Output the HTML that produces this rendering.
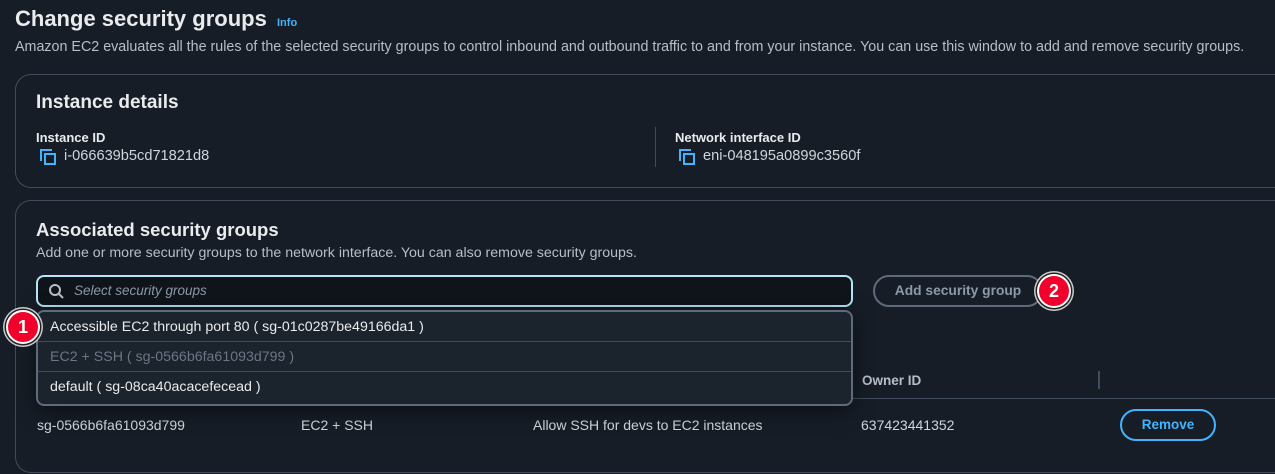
<!DOCTYPE html>
<html><head><meta charset="utf-8"><style>
*{box-sizing:border-box;margin:0;padding:0}
body{width:1275px;height:474px;background:#161d26;font-family:"Liberation Sans",sans-serif;color:#d1d5db;position:relative;overflow:hidden}
.a{position:absolute;white-space:nowrap}
.card{position:absolute;border:1px solid #414d5c;border-radius:16px;border-right:none;border-top-right-radius:0;border-bottom-right-radius:0}
.h{font-weight:bold;color:#e9ebed}
.lbl{font-size:13px;font-weight:bold;color:#e9ebed}
.val{font-size:14.6px;color:#d1d5db}
.badge{position:absolute;width:34px;height:34px;border-radius:50%;background:#f0002a;border:2px solid #fff;box-shadow:0 0 0 1.5px #222,0 0 0 3px #ccc;color:#fff;font-weight:bold;font-size:18px;text-align:center;line-height:30px}
</style></head><body>
<div class="a h" style="left:15px;top:6px;font-size:22px">Change security groups</div>
<div class="a" style="left:277px;top:17px;font-size:11px;font-weight:bold;color:#42b4ff">Info</div>
<div class="a" style="left:15px;top:39px;font-size:14.3px;color:#b6bec9">Amazon EC2 evaluates all the rules of the selected security groups to control inbound and outbound traffic to and from your instance. You can use this window to add and remove security groups.</div>

<div class="card" style="left:15px;top:74px;width:1270px;height:114px"></div>
<div class="a h" style="left:36px;top:92px;font-size:19px">Instance details</div>
<div class="a lbl" style="left:36px;top:130px">Instance ID</div>
<svg class="a" style="left:40px;top:149px" width="16" height="16" viewBox="0 0 16 16" fill="none" stroke="#42b4ff" stroke-width="2"><path d="M1 12V1h11"/><rect x="5" y="5" width="10" height="10"/></svg>
<div class="a val" style="left:64px;top:148px">i-066639b5cd71821d8</div>
<div class="a" style="left:655px;top:127px;width:1px;height:40px;background:#414d5c"></div>
<div class="a lbl" style="left:675px;top:130px">Network interface ID</div>
<svg class="a" style="left:679px;top:149px" width="16" height="16" viewBox="0 0 16 16" fill="none" stroke="#42b4ff" stroke-width="2"><path d="M1 12V1h11"/><rect x="5" y="5" width="10" height="10"/></svg>
<div class="a val" style="left:703px;top:148px">eni-048195a0899c3560f</div>

<div class="card" style="left:15px;top:200px;width:1270px;height:273px"></div>
<div class="a h" style="left:36px;top:219px;font-size:18.5px">Associated security groups</div>
<div class="a" style="left:36px;top:245px;font-size:14.2px;color:#b6bec9">Add one or more security groups to the network interface. You can also remove security groups.</div>
<div class="a" style="left:36px;top:275px;width:817px;height:32px;border:2px solid #b4e5fb;border-radius:8px;background:#0f141a"></div>
<svg class="a" style="left:48px;top:283px" width="16" height="16" viewBox="0 0 16 16" fill="none" stroke="#b6bec9" stroke-width="2"><circle cx="7" cy="7" r="5"/><path d="M11 11l4 4"/></svg>
<div class="a" style="left:74px;top:283px;font-size:13.5px;font-style:italic;color:#8d99a8">Select security groups</div>
<div class="a" style="left:873px;top:275px;width:170px;height:32px;border:2px solid #5f6b7a;border-radius:16px;text-align:center;line-height:28px;font-size:13.8px;font-weight:bold;color:#8d99a8">Add security group</div>
<div class="badge" style="left:1037px;top:274px">2</div>

<div class="a" style="left:37px;top:398px;width:1238px;height:1px;background:#414d5c"></div>
<div class="a" style="left:862px;top:373px;font-size:13.5px;font-weight:bold;color:#b6bec9">Owner ID</div>
<div class="a" style="left:1098px;top:371px;width:2px;height:18px;background:#414d5c"></div>
<div class="a val" style="left:37px;top:417px;font-size:14px">sg-0566b6fa61093d799</div>
<div class="a val" style="left:301px;top:417px;font-size:14px">EC2 + SSH</div>
<div class="a val" style="left:533px;top:417px;font-size:14px">Allow SSH for devs to EC2 instances</div>
<div class="a val" style="left:861px;top:417px;font-size:14px">637423441352</div>
<div class="a" style="left:1120px;top:409px;width:96px;height:32px;border:2px solid #42b4ff;border-radius:16px;text-align:center;line-height:28px;font-size:13.5px;font-weight:bold;color:#42b4ff">Remove</div>

<div class="a" style="left:36px;top:310px;width:817px;height:96px;border:2px solid #5f6b7a;border-radius:8px;background:#1b232d;box-shadow:0 4px 20px rgba(0,0,0,.5)">
<div style="height:30px;line-height:30px;padding-left:12px;font-size:14.2px;color:#e9ebed;border-bottom:1px solid #414d5c">Accessible EC2 through port 80 ( sg-01c0287be49166da1 )</div>
<div style="height:30px;line-height:30px;padding-left:12px;font-size:14.2px;color:#6c7684;border-bottom:1px solid #414d5c">EC2 + SSH ( sg-0566b6fa61093d799 )</div>
<div style="height:30px;line-height:30px;padding-left:12px;font-size:14.2px;color:#e9ebed">default ( sg-08ca40acacefecead )</div>
</div>
<div class="badge" style="left:6px;top:310px">1</div>
</body></html>
